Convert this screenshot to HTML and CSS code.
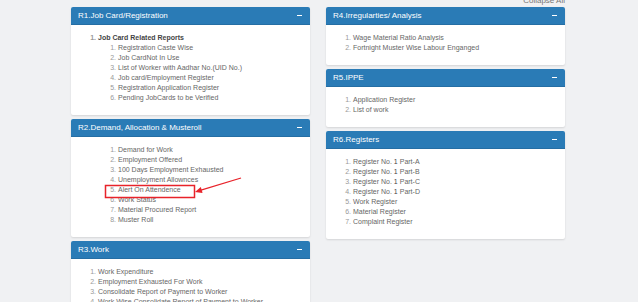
FILE: index.html
```html
<!DOCTYPE html>
<html lang="en">
<head>
    <meta charset="UTF-8">
    <meta name="viewport" content="width=device-width, initial-scale=1.0">
    <title>Reports</title>
    <link rel="stylesheet" href="styles.css">
</head>
<body>
    <div class="page">
        <div class="topbar"><span class="collapse-all">Collapse All</span></div>

        <div class="columns">
            <div class="column">
                <div class="panel">
                    <div class="panel-heading"><span>R1.Job Card/Registration</span><span class="toggle"></span></div>
                    <ol class="items">
                        <li class="group">Job Card Related Reports
                            <ol class="sub">
                                <li>Registration Caste Wise</li>
                                <li>Job CardNot In Use</li>
                                <li>List of Worker with Aadhar No.(UID No.)</li>
                                <li>Job card/Employment Register</li>
                                <li>Registration Application Register</li>
                                <li>Pending JobCards to be Verified</li>
                            </ol>
                        </li>
                    </ol>
                </div>

                <div class="panel">
                    <div class="panel-heading"><span>R2.Demand, Allocation &amp; Musteroll</span><span class="toggle"></span></div>
                    <ol class="items deep">
                        <li>Demand for Work</li>
                        <li>Employment Offered</li>
                        <li>100 Days Employment Exhausted</li>
                        <li>Unemployment Allownces</li>
                        <li>Alert On Attendence</li>
                        <li>Work Status</li>
                        <li>Material Procured Report</li>
                        <li>Muster Roll</li>
                    </ol>
                </div>

                <div class="panel">
                    <div class="panel-heading"><span>R3.Work</span><span class="toggle"></span></div>
                    <ol class="items">
                        <li>Work Expenditure</li>
                        <li>Employment Exhausted For Work</li>
                        <li>Consolidate Report of Payment to Worker</li>
                        <li>Work Wise Consolidate Report of Payment to Worker</li>
                    </ol>
                </div>
            </div>

            <div class="column">
                <div class="panel">
                    <div class="panel-heading"><span>R4.Irregularties/ Analysis</span><span class="toggle"></span></div>
                    <ol class="items">
                        <li>Wage Material Ratio Analysis</li>
                        <li>Fortnight Muster Wise Labour Enganged</li>
                    </ol>
                </div>

                <div class="panel">
                    <div class="panel-heading"><span>R5.IPPE</span><span class="toggle"></span></div>
                    <ol class="items">
                        <li>Application Register</li>
                        <li>List of work</li>
                    </ol>
                </div>

                <div class="panel">
                    <div class="panel-heading"><span>R6.Registers</span><span class="toggle"></span></div>
                    <ol class="items">
                        <li>Register No. <b>1</b> Part-A</li>
                        <li>Register No. <b>1</b> Part-B</li>
                        <li>Register No. <b>1</b> Part-C</li>
                        <li>Register No. <b>1</b> Part-D</li>
                        <li>Work Register</li>
                        <li>Material Register</li>
                        <li>Complaint Register</li>
                    </ol>
                </div>
            </div>
        </div>
    </div>

    <!-- annotation drawn over the screenshot -->
    <svg class="markup" width="638" height="302" viewBox="0 0 638 302">
        <rect x="105.5" y="185.5" width="89" height="12" fill="none" stroke="#e8232a" stroke-width="1.5"/>
        <line x1="241" y1="178" x2="201" y2="190.2" stroke="#e8232a" stroke-width="1.3"/>
        <polygon points="195,192 200.8,187.1 202.6,192.9" fill="#e8232a"/>
    </svg>
</body>
</html>
```

FILE: styles.css
```css
body {
    margin: 0;
    background-color: #f0f1f3;
    font-family: "Liberation Sans", Arial, sans-serif;
    color: #666;
}
.page {
    padding-left: 71px;
}
.topbar {
    width: 494px;
    height: 7px;
    line-height: 1px;
    font-size: 8px;
    text-align: right;
    color: #777;
}
.columns {
    display: grid;
    grid-template-columns: 239px 239px;
    column-gap: 16px;
    align-items: start;
}
.panel {
    background-color: #fff;
    border-radius: 2px;
    box-shadow: 0 1px 2px rgba(0, 0, 0, 0.12);
    margin-bottom: 4px;
    overflow: hidden;
}
.panel-heading {
    display: flex;
    justify-content: space-between;
    align-items: center;
    height: 18px;
    padding: 0 8px 0 7px;
    background-color: #2a7bb6;
    border-bottom: 1px solid #256ea4;
    box-sizing: border-box;
    color: #fff;
    font-size: 8px;
}
.toggle {
    width: 5px;
    height: 1px;
    background-color: #fff;
}
.items {
    margin: 0;
    padding: 8px 0 12px 27px;
    font-size: 7px;
    line-height: 10px;
}
.items.deep {
    padding-left: 47px;
}
.items li::marker {
    color: #999;
}
.items .group {
    color: #444;
    font-weight: bold;
}
.sub {
    margin: 0;
    padding-left: 20px;
    font-weight: normal;
    color: #666;
}
.items b {
    color: #444;
    font-weight: normal;
}
.markup {
    position: absolute;
    top: 0;
    left: 0;
    pointer-events: none;
}
```
